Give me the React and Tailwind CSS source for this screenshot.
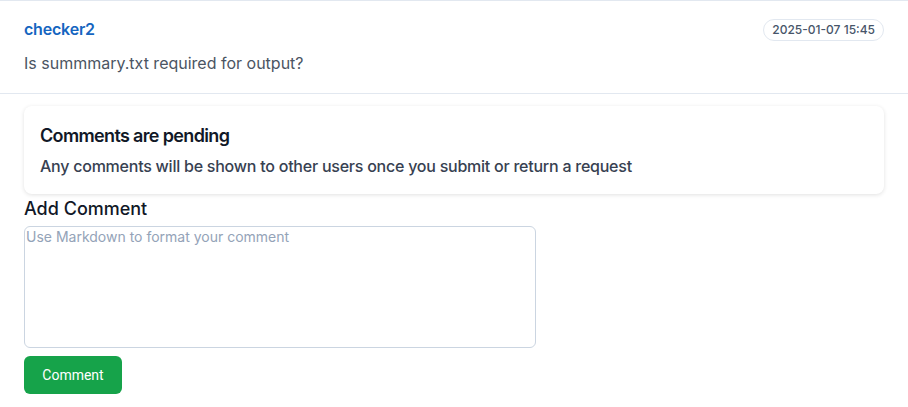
export default function App() {
  return (
    <div className="w-[908px] h-[407px] bg-white overflow-hidden" style={{ fontFamily: "Inter, 'Liberation Sans', sans-serif" }}>
      <div className="border-t border-[#e2e8f0] border-b px-6 pt-[16px] pb-[18px]">
        <div className="flex items-start justify-between">
          <span className="text-[16px] font-semibold text-[#1565c0] leading-[24px] tracking-[-0.2px]">checker2</span>
          <span className="mt-[2px] text-[12px] font-medium text-[#475569] border border-[#e2e8f0] rounded-full px-[8px] leading-[18px] py-[1px]">2025-01-07 15:45</span>
        </div>
        <p className="mt-[10px] text-[16px] text-[#4b5563] leading-[24px]">Is summmary.txt required for output?</p>
      </div>
      <div className="px-6 pt-[12px]">
        <div className="rounded-lg bg-white shadow-[0_1px_4px_rgba(0,0,0,0.12)] px-4 pt-[16px] pb-[14px]">
          <h3 className="text-[18px] font-semibold text-[#111827] leading-[28px] tracking-[-0.65px]">Comments are pending</h3>
          <p className="mt-[2px] text-[16px] font-medium text-[#374151] leading-[28px] tracking-[-0.24px]">Any comments will be shown to other users once you submit or return a request</p>
        </div>
        <h4 className="mt-[1px] text-[18px] font-medium text-[#111827] leading-[28px]">Add Comment</h4>
        <textarea
          className="mt-[3px] block w-[512px] h-[122px] border border-[#cbd5e1] rounded-md px-[1px] py-0 text-[14px] leading-[20px] resize-none outline-none placeholder:text-[#94a3b8]"
          placeholder="Use Markdown to format your comment"
        />
        <button
          className="mt-[8px] h-[38px] w-[98px] rounded-md bg-[#16a34a] text-white text-[14px]"
          style={{ fontFamily: "Roboto, 'Liberation Sans', sans-serif" }}
        >
          Comment
        </button>
      </div>
    </div>
  );
}
